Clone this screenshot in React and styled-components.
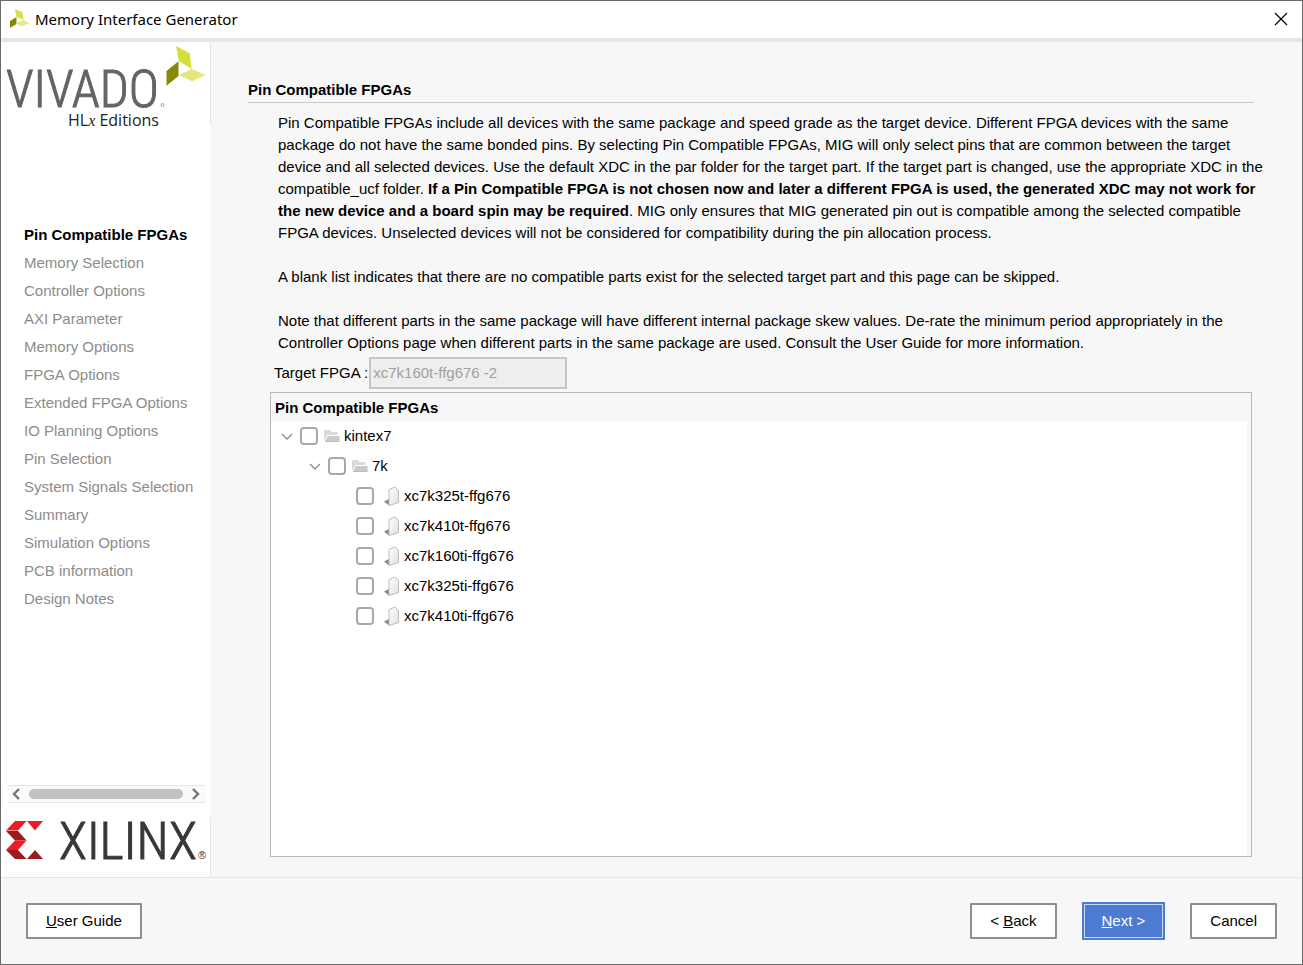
import React from 'react';
import styled, { createGlobalStyle, css } from 'styled-components';

const steps = [
  'Pin Compatible FPGAs',
  'Memory Selection',
  'Controller Options',
  'AXI Parameter',
  'Memory Options',
  'FPGA Options',
  'Extended FPGA Options',
  'IO Planning Options',
  'Pin Selection',
  'System Signals Selection',
  'Summary',
  'Simulation Options',
  'PCB information',
  'Design Notes',
];

const parts = [
  'xc7k325t-ffg676',
  'xc7k410t-ffg676',
  'xc7k160ti-ffg676',
  'xc7k325ti-ffg676',
  'xc7k410ti-ffg676',
];

const Leaves = () => (
  <svg width="20" height="20" viewBox="0 0 20 20" aria-hidden="true">
    <path d="M5 0 L12.500 3 L13.500 11 L6.500 8 Z" fill="#d9e04f" />
    <path d="M6.500 8 V15 L0 19 V12 Z" fill="#868a0c" />
    <path d="M6 14.500 L13 11 L19.500 14 L12 17.500 Z" fill="#e4e98a" />
  </svg>
);

const VivadoLogo = () => (
  <svg width="204" height="84" viewBox="0 0 204 84" role="img" aria-label="Vivado HLx Editions">
    <path d="M170 4 L183.700 11.300 L185.700 27 L172.700 19 Z" fill="#d4de3c" />
    <path d="M172.500 19.300 V34 L160.500 43.700 V29 Z" fill="#868a0c" />
    <path d="M173 33.300 L185.700 27 L199.700 33 L186.300 39.300 Z" fill="#e2e878" />
    <LogoText x="0" y="65" fontSize="51" $color="#646464">
      VIVADO
    </LogoText>
    <circle cx="156.500" cy="63" r="1.500" fill="none" stroke="#888" strokeWidth="0.800" />
    <EditionText x="62" y="84">
      HL<tspan fontFamily="Liberation Serif, serif" fontStyle="italic">x</tspan> Editions
    </EditionText>
  </svg>
);

const XilinxLogo = () => (
  <svg width="204" height="46" viewBox="0 0 204 46" role="img" aria-label="Xilinx">
    <path d="M9 4 H20.500 L12 13.500 H0 Z" fill="#ed1c24" />
    <path d="M0 14 H12 L20.500 23.500 H9 Z" fill="#9b1b22" />
    <path d="M9 23.500 H20.500 L12 33 H0 Z" fill="#ed1c24" />
    <path d="M0 33 H12 L20.500 42 H9 Z" fill="#9b1b22" />
    <path d="M21 4 H37 L29 13.500 Z" fill="#ed1c24" />
    <path d="M29 33 L37 42 H21 Z" fill="#9b1b22" />
    <LogoText x="53" y="42" fontSize="52" $color="#373735">
      XILINX
    </LogoText>
    <text x="192" y="42" fontFamily="Liberation Sans, sans-serif" fontSize="11" fill="#373735">
      ®
    </text>
  </svg>
);

const Chevron = () => (
  <svg width="12" height="12" viewBox="0 0 12 12" aria-hidden="true">
    <path d="M1 4 L6 9 L11 4" fill="none" stroke="#8a8a8a" strokeWidth="1.400" />
  </svg>
);

const FolderIcon = () => (
  <svg width="16" height="14" viewBox="0 0 16 14" aria-hidden="true">
    <path d="M0 1.500 Q0 1 0.500 1 H6 L7.500 3 H13.500 V6 H3.500 L0 12 Z" fill="#d9d9d9" />
    <path d="M4 7 H15.500 V13 H1 V12 Z" fill="#cacaca" />
    <path d="M1 12.500 H15.500" stroke="#bdbdbd" />
  </svg>
);

const PartIcon = () => (
  <svg width="16" height="20" viewBox="0 0 16 20" aria-hidden="true">
    <defs>
      <linearGradient id="sheet" x1="0" y1="0" x2="1" y2="1">
        <stop offset="0" stopColor="#ffffff" />
        <stop offset="1" stopColor="#dedede" />
      </linearGradient>
    </defs>
    <path d="M0 15.500 L5 13 V19.500 Z" fill="#868686" />
    <path
      d="M5 3.500 L11 1 L14.500 4.500 V16.500 L5 19.500 Z"
      fill="url(#sheet)"
      stroke="#bcbcbc"
      strokeLinejoin="round"
    />
  </svg>
);

const Arrow = ({ d }) => (
  <svg width="10" height="14" viewBox="0 0 10 14" aria-hidden="true">
    <path d={d} fill="none" stroke="#757575" strokeWidth="2.400" />
  </svg>
);

const TreeRow = ({ level, label, leaf }) => (
  <Row $level={level}>
    {!leaf && (
      <Toggle type="button" aria-label={`Collapse ${label}`}>
        <Chevron />
      </Toggle>
    )}
    <RowLabel>
      <Check type="checkbox" />
      {leaf ? <PartIcon /> : <FolderIcon />}
      <RowText>{label}</RowText>
    </RowLabel>
  </Row>
);

const App = () => {
  return (
    <>
      <GlobalStyle />
      <Window>
        <TitleBar>
          <Leaves />
          <Title>Memory Interface Generator</Title>
          <Close type="button" aria-label="Close">
            <svg width="14" height="14" viewBox="0 0 14 14" aria-hidden="true">
              <path d="M1 1 L13 13 M13 1 L1 13" stroke="#000" strokeWidth="1.200" />
            </svg>
          </Close>
        </TitleBar>
        <Body>
          <Sidebar>
            <Brand>
              <VivadoLogo />
            </Brand>
            <Nav>
              {steps.map((step, i) => (
                <Step key={step} href="#" $active={i === 0}>
                  {step}
                </Step>
              ))}
            </Nav>
            <ScrollBar>
              <ScrollButton type="button" aria-label="Scroll left">
                <Arrow d="M8 2 L3 7 L8 12" />
              </ScrollButton>
              <Thumb />
              <ScrollButton type="button" aria-label="Scroll right">
                <Arrow d="M2 2 L7 7 L2 12" />
              </ScrollButton>
            </ScrollBar>
            <Brand>
              <XilinxLogo />
            </Brand>
          </Sidebar>
          <Content>
            <Heading>Pin Compatible FPGAs</Heading>
            <Info>
              <p>
                Pin Compatible FPGAs include all devices with the same package and speed grade as
                the target device. Different FPGA devices with the same package do not have the
                same bonded pins. By selecting Pin Compatible FPGAs, MIG will only select pins that
                are common between the target device and all selected devices. Use the default XDC
                in the par folder for the target part. If the target part is changed, use the
                appropriate XDC in the compatible_ucf folder.{' '}
                <b>
                  If a Pin Compatible FPGA is not chosen now and later a different FPGA is used, the
                  generated XDC may not work for the new device and a board spin may be required
                </b>
                . MIG only ensures that MIG generated pin out is compatible among the selected
                compatible FPGA devices. Unselected devices will not be considered for
                compatibility during the pin allocation process.
              </p>
              <p>
                A blank list indicates that there are no compatible parts exist for the selected
                target part and this page can be skipped.
              </p>
              <p>
                Note that different parts in the same package will have different internal package
                skew values. De-rate the minimum period appropriately in the Controller Options
                page when different parts in the same package are used. Consult the User Guide for
                more information.
              </p>
            </Info>
            <Target>
              <label htmlFor="target">Target FPGA :</label>
              <TargetInput id="target" type="text" defaultValue="xc7k160t-ffg676 -2" disabled />
            </Target>
            <Panel>
              <PanelTitle>Pin Compatible FPGAs</PanelTitle>
              <Tree>
                <TreeRow level={0} label="kintex7" />
                <TreeRow level={1} label="7k" />
                {parts.map((part) => (
                  <TreeRow key={part} level={2} label={part} leaf />
                ))}
              </Tree>
            </Panel>
          </Content>
        </Body>
        <Footer>
          <Button type="button">
            <u>U</u>ser Guide
          </Button>
          <Actions>
            <Button type="button">
              &lt; <u>B</u>ack
            </Button>
            <Button type="button" $primary>
              <u>N</u>ext &gt;
            </Button>
            <Button type="button">Cancel</Button>
          </Actions>
        </Footer>
      </Window>
    </>
  );
};

export default App;

const GlobalStyle = createGlobalStyle`
  * {
    box-sizing: border-box;
  }
  body {
    margin: 0;
    font-family: "Liberation Sans", Arial, sans-serif;
    font-size: 15px;
    color: #000;
  }
  button, input {
    font: inherit;
  }
  svg {
    display: block;
    flex-shrink: 0;
    overflow: visible;
  }
`;

const Window = styled.div`
  display: flex;
  flex-direction: column;
  min-height: 100vh;
  border: 1px solid #6b6b6b;
  background: #f7f7f7;
`;

// title bar
const TitleBar = styled.header`
  display: flex;
  align-items: center;
  height: 41px;
  padding: 0 14px 2px 9px;
  background: #fff;
  border-bottom: 4px solid #e6e6e6;
`;

const Title = styled.h1`
  flex: 1;
  margin: 0 0 0 5px;
  font-family: 'Noto Sans', sans-serif;
  font-size: 15px;
  font-weight: 400;
`;

const Close = styled.button`
  padding: 0;
  border: 0;
  background: none;
`;

const Body = styled.div`
  display: flex;
  flex: 1;
`;

// left column
const Sidebar = styled.aside`
  display: flex;
  flex-direction: column;
  flex-shrink: 0;
  width: 210px;
  background: #fff;
`;

const Brand = styled.div`
  min-height: 60px;
  padding-left: 5px;
  border-right: 1px solid #e5e5e5;
`;

const LogoText = styled.text`
  font-family: 'Roboto Condensed', sans-serif;
  font-weight: 300;
  fill: ${(props) => props.$color};
  stroke: ${(props) => props.$color};
  stroke-width: 1px;
`;

const EditionText = styled.text`
  font-family: 'Open Sans', sans-serif;
  font-size: 16px;
  fill: #222;
`;

const Nav = styled.nav`
  display: flex;
  flex-direction: column;
  flex: 1;
  padding: 95px 0 0 23px;
`;

const Step = styled.a`
  line-height: 28px;
  white-space: nowrap;
  text-decoration: none;
  color: ${(props) => (props.$active ? '#000' : '#8c8c8c')};
  font-weight: ${(props) => (props.$active ? 700 : 400)};
`;

const ScrollBar = styled.div`
  display: flex;
  align-items: center;
  gap: 8px;
  height: 18px;
  margin: 0 6px 14px;
  padding: 0 4px;
  background: #fafafa;
  border: 1px solid #e5e5e5;
  border-width: 1px 0;
`;

const ScrollButton = styled.button`
  padding: 0;
  border: 0;
  background: none;
`;

const Thumb = styled.div`
  flex: 1;
  height: 10px;
  border-radius: 5px;
  background: #c1c1c1;
`;

// page
const Content = styled.main`
  display: flex;
  flex-direction: column;
  flex: 1;
  padding: 38px 28px 20px 37px;
`;

const Heading = styled.h2`
  margin: 0 20px 0 0;
  padding-bottom: 2px;
  font-size: 15px;
  line-height: 20px;
  border-bottom: 1px solid #c8c8c8;
`;

const Info = styled.div`
  margin: 9px 0 3px 30px;
  line-height: 22px;

  p {
    margin: 0 0 22px;
  }
  p:last-child {
    margin: 0;
  }
`;

const Target = styled.div`
  display: flex;
  align-items: center;
  gap: 1px;
  margin: 0 0 3px 26px;

  label {
    padding-bottom: 2px;
  }
`;

const TargetInput = styled.input`
  width: 198px;
  height: 32px;
  padding: 0 2px 2px;
  border: 2px solid #c6c6c6;
  background: #eee;
  color: #a0a0a0;
`;

const Panel = styled.section`
  display: flex;
  flex-direction: column;
  flex: 1;
  margin: 0 22px;
  border: 1px solid #b8b8b8;
`;

const PanelTitle = styled.h3`
  margin: 0;
  padding: 2px 0 0 4px;
  font-size: 15px;
  line-height: 26px;
`;

const Tree = styled.ul`
  flex: 1;
  margin: 0 4px 0 0;
  padding: 0;
  list-style: none;
  background: #fff;
`;

const Row = styled.li`
  display: flex;
  align-items: center;
  gap: 7px;
  height: 30px;
  padding-left: ${(props) => (props.$level === 2 ? 85 : 10 + props.$level * 28)}px;
`;

const Toggle = styled.button`
  padding: 0;
  border: 0;
  background: none;
`;

const RowLabel = styled.label`
  display: flex;
  align-items: center;

  svg {
    margin: 0 4px 0 6px;
  }
  svg[height='20'] {
    margin-left: 10px;
  }
`;

const RowText = styled.span`
  padding-bottom: 2px;
`;

const Check = styled.input`
  appearance: none;
  width: 18px;
  height: 18px;
  margin: 0;
  border: 2px solid #a8a8a8;
  border-radius: 4px;
  background: #fff;
`;

// bottom bar
const Footer = styled.footer`
  display: flex;
  align-items: center;
  justify-content: space-between;
  padding: 24px 25px;
  border-top: 1px solid #e5e5e5;
`;

const Actions = styled.div`
  display: flex;
  align-items: center;
  gap: 25px;
`;

const Button = styled.button`
  height: 36px;
  padding: 0 18px 2px;
  border: 2px solid #8e8e8e;
  border-radius: 1px;
  background: #fff;
  color: #000;

  ${(props) =>
    props.$primary &&
    css`
      height: 38px;
      border-color: #4d7bd1;
      border-radius: 0;
      background: #4d7bd1;
      box-shadow: inset 0 0 0 1px #c9d8f3;
      color: #fff;
    `}
`;
